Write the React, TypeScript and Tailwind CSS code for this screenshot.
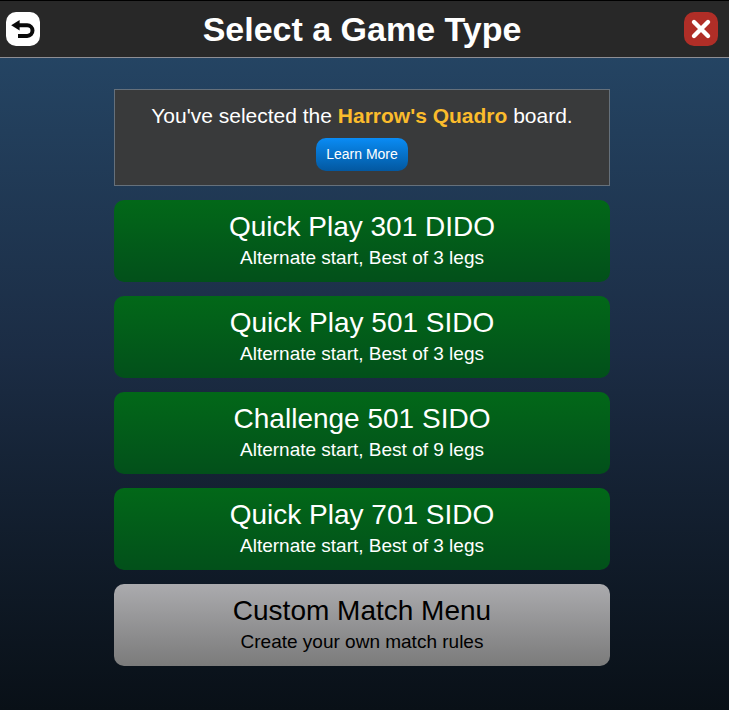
import React from 'react';

interface GameType {
  title: string;
  rules: string;
  custom?: boolean;
}

const GAME_TYPES: GameType[] = [
  { title: 'Quick Play 301 DIDO', rules: 'Alternate start, Best of 3 legs' },
  { title: 'Quick Play 501 SIDO', rules: 'Alternate start, Best of 3 legs' },
  { title: 'Challenge 501 SIDO', rules: 'Alternate start, Best of 9 legs' },
  { title: 'Quick Play 701 SIDO', rules: 'Alternate start, Best of 3 legs' },
  { title: 'Custom Match Menu', rules: 'Create your own match rules', custom: true },
];

const Header: React.FC = () => (
  <header className="flex items-center justify-between h-[58px] pl-[6px] pr-[11px] bg-[#282828] border-t border-t-black border-b border-b-[#8e8e94]">
    <button aria-label="Back" className="w-[34px] h-[34px] rounded-[10px] bg-white flex items-center justify-center">
      <svg width="34" height="34" viewBox="0 0 34 34" fill="none">
        <path d="M11 13.3h10.2a5.2 5.2 0 0 1 0 10.6H12" stroke="#0a0a0a" strokeWidth="4" />
        <path d="M5.2 13.2 13.6 8v10.4z" fill="#0a0a0a" />
      </svg>
    </button>
    <h1 className="text-white font-bold text-[34px] leading-10">Select a Game Type</h1>
    <button aria-label="Close" className="w-[34px] h-[34px] rounded-[10px] bg-[#b02e27] flex items-center justify-center">
      <svg width="34" height="34" viewBox="0 0 34 34" fill="none">
        <path d="M10 10l14 14M24 10L10 24" stroke="#fff" strokeWidth="4.4" strokeLinecap="round" />
      </svg>
    </button>
  </header>
);

const BoardNotice: React.FC = () => (
  <section className="flex flex-col items-center gap-2 pt-3 pb-[14px] bg-[#393a3b] border border-[#65707b]">
    <p className="text-white text-[21px] leading-7">
      You've selected the <strong className="text-[#fbbc2c]">Harrow's Quadro</strong> board.
    </p>
    <button className="h-[33px] px-[10px] rounded-[10px] text-white text-[14px] bg-linear-to-b from-[#0a8cf5] to-[#0358a0]">
      Learn More
    </button>
  </section>
);

const GameTypeButton: React.FC<{ game: GameType }> = ({ game }) => (
  <button
    className={`w-full pt-[11px] pb-[10px] gap-px rounded-[10px] flex flex-col items-center bg-linear-to-b ${
      game.custom ? 'text-black from-[#ababae] to-[#7b7b7b]' : 'text-white from-[#026818] to-[#02501a]'
    }`}
  >
    <span className="text-[28px] leading-8">{game.title}</span>
    <span className="text-[19px] leading-7">{game.rules}</span>
  </button>
);

export default function App() {
  return (
    <div className="min-h-screen bg-linear-to-b from-[#264969] via-[#1b2c44] to-[#091017] font-['Liberation_Sans',Arial,sans-serif]">
      <Header />
      <div className="pr-[5px]">
        <main className="w-[68.4%] mx-auto pt-[31px] pb-8 flex flex-col gap-[14px]">
          <BoardNotice />
          {GAME_TYPES.map((game) => (
            <GameTypeButton key={game.title} game={game} />
          ))}
        </main>
      </div>
    </div>
  );
}
